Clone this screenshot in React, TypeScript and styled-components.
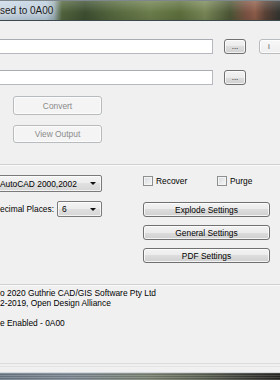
import React from "react";
import styled, { createGlobalStyle } from "styled-components";

const Global = createGlobalStyle`
  html, body { margin: 0; padding: 0; background: #f0f0f0; }
  body { font-family: "Liberation Sans", Arial, sans-serif; }
  #root { width: 280px; height: 380px; }
`;

const Frame = styled.div`
  width: 280px;
  height: 380px;
  overflow: hidden;
  display: flex;
  flex-direction: column;
  background: #f0f0f0;
  font-size: 8.4px;
  color: #000;
`;

const TitleBar = styled.div`
  flex: none;
  height: 21px;
  box-sizing: border-box;
  display: flex;
  align-items: center;
  padding-left: 0;
  font-size: 10px;
  color: #1c1c1c;
  border-top: 1px solid #7d878c;
  border-bottom: 1px solid #3c4a4f;
  background:
    linear-gradient(180deg, rgba(255,255,255,0.18), rgba(0,0,0,0.05) 60%, rgba(0,0,0,0.12)),
    linear-gradient(90deg, #cddcea 0px, #bccfdf 46px, #9fb2b8 54px, #55683f 62px, #3f5233 85px,
      #5a6d41 115px, #71834f 150px, #61733f 180px, #7d8c5a 205px, #4f5a38 230px,
      #805646 246px, #93604c 255px, #5b4438 266px, #343532 280px);
`;

const Title = styled.span`
  text-shadow: 0 0 6px rgba(255,255,255,0.9);
  white-space: nowrap;
`;

const Body = styled.div`
  flex: 1;
  display: flex;
  flex-direction: column;
  padding-top: 18px;
`;

const FileRow = styled.div<{ $mb?: number }>`
  display: flex;
  align-items: flex-start;
  height: 15px;
  margin-bottom: ${(p) => p.$mb ?? 0}px;
`;

const TextBox = styled.div`
  flex: none;
  margin-left: -4px;
  width: 217px;
  height: 15px;
  box-sizing: border-box;
  background: #fff;
  border: 1px solid #b5b8be;
  border-top-color: #a9acb2;
`;

const SmallButton = styled.div<{ $ml: number; $w: number; $light?: boolean }>`
  flex: none;
  margin-left: ${(p) => p.$ml}px;
  width: ${(p) => p.$w}px;
  height: 15px;
  box-sizing: border-box;
  border: 1px solid ${(p) => (p.$light ? "#b9bcbf" : "#707070")};
  border-radius: 3px;
  background: ${(p) =>
    p.$light
      ? "linear-gradient(#f7f7f7, #efefef)"
      : "linear-gradient(#f3f3f3, #ebebeb 50%, #dddddd 50%, #d0d0d0)"};
  display: flex;
  align-items: center;
  justify-content: ${(p) => (p.$light ? "flex-start" : "center")};
  padding-left: ${(p) => (p.$light ? "8px" : "0")};
  font-size: 8px;
  line-height: 1;
  color: ${(p) => (p.$light ? "#555" : "#000")};
  box-shadow: inset 0 0 0 1px rgba(255,255,255,0.7);
`;

const ActionButton = styled.div<{ $w: number; $h: number; $mt: number; $ml?: number; $disabled?: boolean }>`
  flex: none;
  width: ${(p) => p.$w}px;
  height: ${(p) => p.$h}px;
  margin-top: ${(p) => p.$mt}px;
  margin-left: ${(p) => p.$ml ?? 0}px;
  box-sizing: border-box;
  border: 1px solid ${(p) => (p.$disabled ? "#b7bbbe" : "#707070")};
  border-radius: 3px;
  background: ${(p) =>
    p.$disabled
      ? "#f4f4f4"
      : "linear-gradient(#f3f3f3, #ebebeb 50%, #dddddd 50%, #cfcfcf)"};
  box-shadow: inset 0 0 0 1px rgba(255,255,255,0.75);
  display: flex;
  align-items: center;
  justify-content: center;
  color: ${(p) => (p.$disabled ? "#8a8a8a" : "#000")};
  white-space: nowrap;
`;

const Separator = styled.div<{ $mt: number }>`
  flex: none;
  margin-top: ${(p) => p.$mt}px;
  height: 1px;
  background: #cfcfcf;
  border-bottom: 1px solid #fbfbfb;
`;

const Options = styled.div`
  display: flex;
  align-items: flex-start;
  padding-top: 9px;
`;

const LeftCol = styled.div`
  flex: none;
  width: 102px;
  display: flex;
  flex-direction: column;
  gap: 9px;
`;

const RightCol = styled.div`
  flex: none;
  margin-left: 41px;
  width: 128px;
  display: flex;
  flex-direction: column;
`;

const Combo = styled.div<{ $w: number; $h: number; $ml?: number }>`
  flex: none;
  width: ${(p) => p.$w}px;
  height: ${(p) => p.$h}px;
  margin-left: ${(p) => p.$ml ?? 0}px;
  box-sizing: border-box;
  border: 1px solid #7a7a7a;
  border-radius: 2px;
  background: linear-gradient(#f4f4f4, #ececec 50%, #e0e0e0 50%, #d6d6d6);
  box-shadow: inset 0 0 0 1px rgba(255,255,255,0.7);
  display: flex;
  align-items: center;
  justify-content: space-between;
  padding: 0 4px 0 4px;
  white-space: nowrap;
`;

const Arrow = styled.span`
  width: 0;
  height: 0;
  border-left: 3px solid transparent;
  border-right: 3px solid transparent;
  border-top: 3px solid #111;
  margin-right: 1px;
`;

const DecimalRow = styled.div`
  display: flex;
  align-items: center;
  justify-content: space-between;
  height: 16px;
`;

const CheckRow = styled.div`
  display: flex;
  align-items: center;
  margin-top: 1px;
  height: 10px;
`;

const CheckItem = styled.div<{ $w?: number }>`
  display: flex;
  align-items: center;
  gap: 3px;
  width: ${(p) => (p.$w ? `${p.$w}px` : "auto")};
`;

const Box = styled.span`
  width: 10px;
  height: 10px;
  box-sizing: border-box;
  border: 1px solid #8e8f8f;
  background: linear-gradient(135deg, #d6d9dd, #f7f7f7);
  box-shadow: inset 0 0 0 1px #f4f4f4;
`;

const Footer = styled.div`
  margin-top: 2px;
  line-height: 10px;
  white-space: nowrap;
`;

const FooterLine = styled.div<{ $mt?: number }>`
  margin-top: ${(p) => p.$mt ?? 0}px;
  height: 10px;
`;

const Spacer = styled.div`
  flex: 1;
`;

const Rule = styled.div<{ $color: string; $mb: number }>`
  flex: none;
  height: 1px;
  background: ${(p) => p.$color};
  margin-bottom: ${(p) => p.$mb}px;
`;

const Taskbar = styled.div`
  flex: none;
  height: 8px;
  box-sizing: border-box;
  border-top: 1px solid #d3d9de;
  background:
    repeating-linear-gradient(180deg, rgba(255,255,255,0.12) 0 1px, rgba(0,0,0,0.1) 1px 2px),
    linear-gradient(90deg, #6f7c89 0px, #7f8a95 70px, #7c8474 150px, #5f6657 200px, #3f413c 245px, #262624 280px);
`;

export default function App() {
  return (
    <>
      <Global />
      <Frame>
        <TitleBar>
          <Title>sed to 0A00</Title>
        </TitleBar>
        <Body>
          <FileRow $mb={16}>
            <TextBox />
            <SmallButton $ml={11} $w={22}>...</SmallButton>
            <SmallButton $ml={13} $w={26} $light>i</SmallButton>
          </FileRow>
          <FileRow>
            <TextBox />
            <SmallButton $ml={11} $w={22}>...</SmallButton>
          </FileRow>

          <ActionButton $w={89} $h={19} $mt={11} $ml={13} $disabled>Convert</ActionButton>
          <ActionButton $w={89} $h={18} $mt={10} $ml={13} $disabled>View Output</ActionButton>

          <Separator $mt={21} />

          <Options>
            <LeftCol>
              <Combo $w={107} $h={17} $ml={-5}>
                <span>AutoCAD 2000,2002</span>
                <Arrow />
              </Combo>
              <DecimalRow>
                <span>ecimal Places:</span>
                <Combo $w={45} $h={16}>
                  <span>6</span>
                  <Arrow />
                </Combo>
              </DecimalRow>
            </LeftCol>
            <RightCol>
              <CheckRow>
                <CheckItem $w={74}>
                  <Box />
                  <span>Recover</span>
                </CheckItem>
                <CheckItem>
                  <Box />
                  <span>Purge</span>
                </CheckItem>
              </CheckRow>
              <ActionButton $w={127} $h={15} $mt={16}>Explode Settings</ActionButton>
              <ActionButton $w={127} $h={15} $mt={8}>General Settings</ActionButton>
              <ActionButton $w={127} $h={15} $mt={8}>PDF Settings</ActionButton>
            </RightCol>
          </Options>

          <Separator $mt={21} />

          <Footer>
            <FooterLine>o 2020 Guthrie CAD/GIS Software Pty Ltd</FooterLine>
            <FooterLine>2-2019, Open Design Alliance</FooterLine>
            <FooterLine $mt={10}>e Enabled - 0A00</FooterLine>
          </Footer>

          <Spacer />
          <Rule $color="#dcdcdc" $mb={2} />
          <Rule $color="#e4e4e4" $mb={5} />
          <Taskbar />
        </Body>
      </Frame>
    </>
  );
}
